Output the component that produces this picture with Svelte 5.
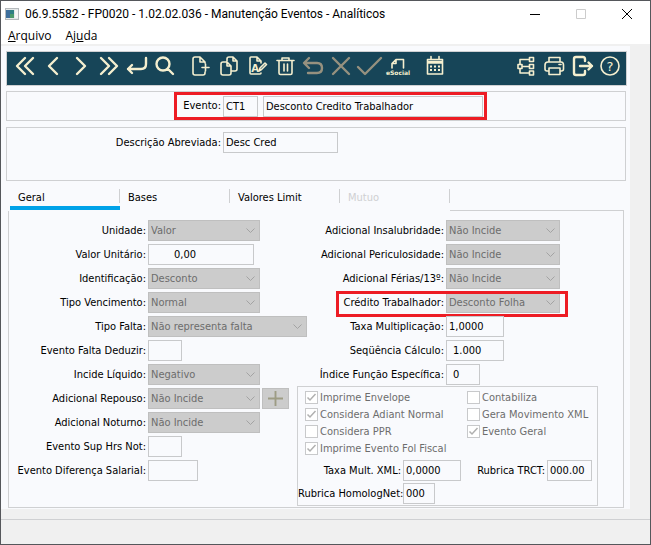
<script lang="ts">
	interface Field {
		id: string;
		label: string;
		value: string;
		size: string;
		kind?: 'select' | 'input';
		indent?: boolean;
		add?: boolean;
		marked?: boolean;
	}

	interface Check {
		id: string;
		label: string;
		checked: boolean;
	}

	interface Tool {
		icon: string;
		label: string;
		disabled?: boolean;
	}

	const toolGroups: Tool[][] = [
		[
			{ icon: 'first', label: 'Primeiro' },
			{ icon: 'prev', label: 'Anterior' },
			{ icon: 'next', label: 'Próximo' },
			{ icon: 'last', label: 'Último' },
			{ icon: 'enter', label: 'Vá para' },
			{ icon: 'search', label: 'Pesquisa' }
		],
		[
			{ icon: 'new', label: 'Inclui' },
			{ icon: 'copy', label: 'Copia' },
			{ icon: 'edit', label: 'Modifica' },
			{ icon: 'trash', label: 'Elimina' },
			{ icon: 'undo', label: 'Desfaz', disabled: true },
			{ icon: 'cancel', label: 'Cancela', disabled: true },
			{ icon: 'ok', label: 'Confirma', disabled: true },
			{ icon: 'esocial', label: 'eSocial' }
		],
		[{ icon: 'calendar', label: 'Calendário' }],
		[
			{ icon: 'tree', label: 'Consultas relacionadas' },
			{ icon: 'print', label: 'Relatórios' },
			{ icon: 'exit', label: 'Sair' },
			{ icon: 'help', label: 'Ajuda' }
		]
	];

	const strokes: Record<string, string> = {
		first: 'M14 6l-8 8 8 8M22 6l-8 8 8 8',
		prev: 'M18 6l-8 8 8 8',
		next: 'M10 6l8 8-8 8',
		last: 'M6 6l8 8-8 8M14 6l8 8-8 8',
		enter: 'M23 6v6q0 5-5 5H5M9 13l-4 4 4 4',
		search: 'M12 5.5a6.5 6.5 0 1 0 0 13a6.5 6.5 0 1 0 0-13M17 17l5 5',
		new: 'M17 11v-1l-5-5H7q-2 0-2 2v14q0 2 2 2h8q2 0 2-2v-1M12 5v5h5M17.5 12v7M14 15.5h7',
		copy: 'M11 9V7q0-2 2-2h4l4 4v8q0 2-2 2h-4M17 5v4h4M7 10h4l4 4v7q0 2-2 2H7q-2 0-2-2v-9q0-2 2-2zM11 10v4h4',
		edit: 'M17 11V9l-4-4H7q-1 0-1 1v15q0 1 1 1h9q1 0 1-1M13 5v4h4M15 19l1-3 5-5 1.5 1.5-5 5z',
		trash: 'M5 8.5h17M10 8V6h7v2M7 9v12q0 1.500 1.500 1.500h10q1.500 0 1.500-1.500V9M12 12v7M15.500 12v7',
		undo: 'M5 11h12q5 0 5 5t-5 5H8M9 6l-5 5 5 5',
		cancel: 'M5 6l16 16M21 6L5 22',
		ok: 'M2 15l7 7L25 6',
		esocial: 'M19.500 16V7.500H12L8 11.500V16M12 7.500v4H8',
		calendar: 'M6.500 7.500h15v14.500h-15zM10 4.500v3M18 4.500v3',
		tree: 'M6 12.500h4v4H6zM17.500 5.500h4v4h-4zM17.500 12.500h4v4h-4zM17.500 19h4v4h-4zM10 14.500h7M8 12V7.500h9M8 17v4h9',
		print: 'M9 10V5.500h11V10M9 19H7q-2 0-2-2v-4q0-3 3-3h13q2.500 0 2.500 3v4q0 2-2 2H20M9 16h11v6.500H9zM19 12.500h2',
		exit: 'M17 9V7q0-2-2-2H8Q6 5 6 7v14q0 2 2 2h7q2 0 2-2v-2M12 14h12M20.500 10.500l3.500 3.500-3.500 3.500',
		help: 'M14 5a9 9 0 1 0 0 18a9 9 0 1 0 0-18'
	};

	const heavy = ['first', 'prev', 'next', 'last', 'enter', 'search', 'undo', 'cancel', 'ok', 'exit'];

	const tabs = [
		{ label: 'Geral', disabled: false },
		{ label: 'Bases', disabled: false },
		{ label: 'Valores Limit', disabled: false },
		{ label: 'Mutuo', disabled: true }
	];

	const leftFields: Field[] = [
		{ id: 'unidade', label: 'Unidade:', value: 'Valor', size: 'combo', kind: 'select' },
		{ id: 'valor-unitario', label: 'Valor Unitário:', value: '0,00', size: 'amount' },
		{ id: 'identificacao', label: 'Identificação:', value: 'Desconto', size: 'combo', kind: 'select' },
		{ id: 'tipo-vencimento', label: 'Tipo Vencimento:', value: 'Normal', size: 'combo', kind: 'select' },
		{ id: 'tipo-falta', label: 'Tipo Falta:', value: 'Não representa falta', size: 'combo-wide', kind: 'select' },
		{ id: 'falta-deduzir', label: 'Evento Falta Deduzir:', value: '', size: 'short' },
		{ id: 'incide-liquido', label: 'Incide Líquido:', value: 'Negativo', size: 'combo', kind: 'select' },
		{ id: 'adic-repouso', label: 'Adicional Repouso:', value: 'Não Incide', size: 'combo', kind: 'select', add: true },
		{ id: 'adic-noturno', label: 'Adicional Noturno:', value: 'Não Incide', size: 'combo', kind: 'select' },
		{ id: 'sup-hrs-not', label: 'Evento Sup Hrs Not:', value: '', size: 'short' },
		{ id: 'dif-salarial', label: 'Evento Diferença Salarial:', value: '', size: 'medium' }
	];

	const rightFields: Field[] = [
		{ id: 'insalubridade', label: 'Adicional Insalubridade:', value: 'Não Incide', size: 'combo', kind: 'select' },
		{ id: 'periculosidade', label: 'Adicional Periculosidade:', value: 'Não Incide', size: 'combo', kind: 'select' },
		{ id: 'ferias', label: 'Adicional Férias/13º:', value: 'Não Incide', size: 'combo', kind: 'select' },
		{ id: 'credito', label: 'Crédito Trabalhador:', value: 'Desconto Folha', size: 'combo', kind: 'select', marked: true },
		{ id: 'taxa', label: 'Taxa Multiplicação:', value: '1,0000', size: 'rate' },
		{ id: 'sequencia', label: 'Seqüência Cálculo:', value: '1.000', size: 'rate', indent: true },
		{ id: 'indice', label: 'Índice Função Específica:', value: '0', size: 'short', indent: true }
	];

	const checkColumns: Check[][] = [
		[
			{ id: 'envelope', label: 'Imprime Envelope', checked: true },
			{ id: 'adiant', label: 'Considera Adiant Normal', checked: true },
			{ id: 'ppr', label: 'Considera PPR', checked: false },
			{ id: 'fol-fiscal', label: 'Imprime Evento Fol Fiscal', checked: true }
		],
		[
			{ id: 'contabiliza', label: 'Contabiliza', checked: false },
			{ id: 'gera-xml', label: 'Gera Movimento XML', checked: false },
			{ id: 'geral', label: 'Evento Geral', checked: true }
		]
	];

	let active = $state(0);
</script>

{#snippet fieldRow(field: Field)}
	<div class="field" class:marked={field.marked}>
		<label for={field.id}>{field.label}</label>
		{#if field.kind === 'select'}
			<select id={field.id} class={field.size} disabled>
				<option>{field.value}</option>
			</select>
		{:else}
			<input id={field.id} class={field.size} class:indent={field.indent} type="text" value={field.value} />
		{/if}
		{#if field.add}
			<button class="add" type="button" aria-label="Adicionar" disabled>
				<svg viewBox="0 0 16 16"><path d="M8 0v16M0 8h16" /></svg>
			</button>
		{/if}
	</div>
{/snippet}

<div class="window">
	<header class="titlebar">
		<svg class="app-icon" viewBox="0 0 14 12">
			<rect x="0.5" y="0.5" width="13" height="11" fill="#e4e8e8" stroke="#b5b9bc" />
			<rect x="1" y="2" width="8" height="8" fill="#2f7f84" />
			<rect x="1" y="2" width="4" height="8" fill="#3d6f9c" />
			<rect x="5" y="6" width="4" height="4" fill="#4a9a6c" />
			<rect x="10" y="2" width="3" height="8" fill="#f6f6f6" />
		</svg>
		<h1>06.9.5582 - FP0020 - 1.02.02.036 - Manutenção Eventos - Analíticos</h1>
		<div class="controls">
			<button type="button" aria-label="Minimizar">
				<svg viewBox="0 0 12 12"><path d="M1 6.500h10" /></svg>
			</button>
			<button type="button" aria-label="Maximizar" disabled>
				<svg viewBox="0 0 12 12"><path d="M1.500 1.500h9v9h-9z" /></svg>
			</button>
			<button type="button" aria-label="Fechar">
				<svg viewBox="0 0 12 12"><path d="M1 1l10 10M11 1L1 11" /></svg>
			</button>
		</div>
	</header>

	<nav class="menubar">
		<button type="button"><u>A</u>rquivo</button>
		<button type="button">Aj<u>u</u>da</button>
	</nav>

	<main>
		<div class="toolbar" role="toolbar" aria-label="Ferramentas">
			{#each toolGroups as group}
				<div class="group">
					{#each group as tool (tool.icon)}
						<button type="button" aria-label={tool.label} disabled={tool.disabled}>
							<svg viewBox="0 0 28 28" class:heavy={heavy.includes(tool.icon)}>
								<path d={strokes[tool.icon]} />
								{#if tool.icon === 'edit'}
									<text x="11" y="20" font-size="10">A</text>
								{:else if tool.icon === 'esocial'}
									<text x="14" y="23" font-size="6">eSocial</text>
								{:else if tool.icon === 'help'}
									<text class="thin" x="14" y="19" font-size="13">?</text>
								{:else if tool.icon === 'calendar'}
									<path d="M7 9.500h14M7 11h14" />
									<path class="dots" d="M9 14.500h2M13 14.500h2M17 14.500h2M9 18h2M13 18h2M17 18h2" />
								{/if}
							</svg>
						</button>
					{/each}
				</div>
			{/each}
		</div>

		<section class="panel key">
			<div class="highlight">
				<label for="evento">Evento:</label>
				<div class="pair">
					<input id="evento" class="code" type="text" value="CT1" />
					<input class="description" type="text" aria-label="Descrição" value="Desconto Credito Trabalhador" />
				</div>
			</div>
		</section>

		<section class="panel summary">
			<label for="abreviada">Descrição Abreviada:</label>
			<input id="abreviada" class="abbrev" type="text" value="Desc Cred" />
		</section>

		<div class="tabs" role="tablist">
			{#each tabs as tab, i (tab.label)}
				<button
					type="button"
					role="tab"
					aria-selected={active === i}
					class:active={active === i}
					disabled={tab.disabled}
					onclick={() => (active = i)}
				>
					<span>{tab.label}</span>
				</button>
			{/each}
			<div class="filler"></div>
		</div>

		<section class="page" role="tabpanel">
			<div class="column left">
				{#each leftFields as field (field.id)}
					{@render fieldRow(field)}
				{/each}
			</div>

			<div class="column right">
				{#each rightFields as field (field.id)}
					{@render fieldRow(field)}
				{/each}

				<div class="box">
					<div class="checks">
						{#each checkColumns as column}
							<div class="check-column">
								{#each column as check (check.id)}
									<div class="check">
										<input id={check.id} type="checkbox" checked={check.checked} disabled />
										<label for={check.id}>{check.label}</label>
									</div>
								{/each}
							</div>
						{/each}
					</div>
					<div class="codes">
						<label for="taxa-xml">Taxa Mult. XML:</label>
						<input id="taxa-xml" class="rate" type="text" value="0,0000" />
						<label for="trct">Rubrica TRCT:</label>
						<input id="trct" class="trct" type="text" value="000.00" />
						<label for="homolog">Rubrica HomologNet:</label>
						<input id="homolog" class="homolog" type="text" value="000" />
					</div>
				</div>
			</div>
		</section>
	</main>

	<footer class="status"></footer>
</div>

<style>
	:global(body) {
		margin: 0;
	}

	.window {
		--line: #cfd0d2;
		--surface: #f9fafd;
		--cream: #f5efcf;
		--red: #ed1c24;
		display: flex;
		flex-direction: column;
		box-sizing: border-box;
		min-height: 100vh;
		border: 1px solid #55575b;
		background: #f0f0f0;
		color: #000;
		font-family: 'DejaVu Sans Condensed', Tahoma, 'DejaVu Sans', sans-serif;
		font-size: 11px;
	}

	.window *,
	.window *::after {
		box-sizing: border-box;
	}

	button {
		padding: 0;
		border: 0;
		background: none;
		color: inherit;
		font: inherit;
	}

	svg {
		display: block;
		fill: none;
		stroke: currentColor;
	}

	/* Title bar and menu */
	.titlebar {
		display: flex;
		align-items: center;
		height: 25px;
		padding-left: 4px;
		background: #fff;
	}

	.app-icon {
		width: 14px;
		height: 12px;
		stroke: none;
	}

	h1 {
		flex: 1;
		margin: 0 0 0 6px;
		font-family: Roboto, 'Segoe UI', sans-serif;
		font-size: 12px;
		font-weight: 400;
		white-space: nowrap;
	}

	.controls {
		display: flex;
	}

	.controls button {
		display: grid;
		place-items: center;
		width: 46px;
		height: 25px;
	}

	.controls svg {
		width: 12px;
		height: 12px;
	}

	.controls button:disabled {
		color: #ccc;
	}

	.menubar {
		display: flex;
		gap: 14px;
		height: 18px;
		padding-left: 7px;
		background: #fff;
		font-family: 'Open Sans', 'Segoe UI', sans-serif;
		font-size: 12px;
		line-height: 20px;
	}

	/* Work area */
	main {
		margin-right: 20px;
		margin-top: 2px;
		padding: 5px 3px 1px 5px;
		background: var(--surface);
	}

	.toolbar {
		display: flex;
		gap: 9px;
		height: 35px;
		margin-bottom: 5px;
		padding: 0 2px 0 4px;
		border: 1px solid var(--line);
		background: #174558;
		color: var(--cream);
	}

	.group {
		display: flex;
	}

	.group:last-child {
		margin-left: auto;
	}

	.group button {
		width: 28px;
		height: 28px;
	}

	.group button:disabled {
		color: #96917f;
	}

	.group svg {
		width: 28px;
		height: 28px;
		stroke-width: 1.6;
		stroke-linecap: round;
		stroke-linejoin: round;
	}

	.group svg.heavy {
		stroke-width: 2.4;
	}

	.group text {
		fill: currentColor;
		stroke: none;
		font-family: 'DejaVu Sans', sans-serif;
		font-weight: 700;
		text-anchor: middle;
	}

	.group text.thin {
		font-weight: 400;
	}

	.dots {
		stroke-linecap: butt;
		stroke-width: 2;
	}

	.panel {
		display: flex;
		margin: 0 1px 6px 0;
		border: 1px solid var(--line);
	}

	.key {
		padding-left: 167px;
	}

	.highlight {
		display: flex;
		align-items: center;
		gap: 2px;
		width: 313px;
		height: 28px;
		border: 3px solid var(--red);
	}

	.highlight label {
		width: 44px;
		text-align: right;
	}

	.pair {
		display: flex;
		gap: 5px;
	}

	.summary {
		gap: 2px;
		height: 54px;
		margin-bottom: 5px;
		padding-top: 4px;
	}

	.summary label {
		width: 214px;
		text-align: right;
	}

	label {
		line-height: 22px;
		white-space: nowrap;
	}

	input[type='text'],
	select {
		height: 21px;
		margin: 0;
		padding: 0 2px;
		border: 1px solid #c8c9cb;
		border-radius: 0;
		background: var(--surface);
		color: #000;
		font: inherit;
	}

	select {
		appearance: none;
		background: #ccc
			url("data:image/svg+xml,%3csvg xmlns='http://www.w3.org/2000/svg' viewBox='0 0 9 5' fill='none' stroke='%23a3a3a3'%3e%3cpath d='M.5.5l4 4 4-4'/%3e%3c/svg%3e")
			no-repeat right 4px center / 9px 5px;
		border-color: #bfbfbf;
		color: #6d6d6d;
		opacity: 1;
	}

	.code {
		width: 35px;
	}

	.description {
		width: 220px;
	}

	.abbrev {
		width: 115px;
	}

	/* Tabs */
	.tabs {
		display: flex;
		height: 25px;
		margin: 0 3px 0 4px;
	}

	.tabs button {
		width: 110px;
		height: 24px;
		border-bottom: 4px solid transparent;
		text-align: left;
	}

	.tabs button.active {
		border-color: #00a2e8;
	}

	.tabs button:disabled {
		color: #cfd0d2;
	}

	.tabs span {
		display: block;
		height: 14px;
		padding-left: 8px;
		border-right: 1px solid var(--line);
		line-height: 17px;
	}

	.filler {
		flex: 1;
		border-bottom: 1px solid var(--line);
	}

	.page {
		display: flex;
		margin: 0 3px 0 2px;
		padding: 9px 0 1px;
		border: 1px solid var(--line);
		border-top: 0;
	}

	.column {
		display: flex;
		flex-direction: column;
		gap: 3px;
	}

	.left {
		flex: none;
		width: 288px;
	}

	.right {
		flex: 1;
		min-width: 0;
	}

	.field {
		position: relative;
		display: flex;
		gap: 2px;
		height: 21px;
	}

	.field > * {
		flex: none;
	}

	.field label {
		width: 137px;
		text-align: right;
	}

	.right .field label {
		width: 147px;
	}

	.marked::after {
		content: '';
		position: absolute;
		top: -1px;
		left: 39px;
		width: 232px;
		height: 26px;
		border: 3px solid var(--red);
	}

	.combo {
		width: 112px;
	}

	.right .combo {
		width: 114px;
	}

	.combo-wide {
		width: 159px;
	}

	input.amount {
		width: 106px;
		padding-left: 25px;
	}

	.short {
		width: 34px;
	}

	.medium {
		width: 50px;
	}

	.rate {
		width: 58px;
	}

	input.indent {
		padding-left: 6px;
	}

	.add {
		display: grid;
		place-items: center;
		width: 27px;
		height: 21px;
		border: 1px solid #bfbfbf;
		background: #ccc;
		color: #9d9c84;
	}

	.add svg {
		width: 15px;
		height: 15px;
		stroke-width: 2;
	}

	/* Options box */
	.box {
		margin: -2px 25px 0 0;
		padding: 2px 6px 1px 0;
		border: 1px solid var(--line);
	}

	.checks {
		display: flex;
		padding-left: 7px;
	}

	.check-column:first-child {
		width: 162px;
	}

	.check {
		display: flex;
		align-items: center;
		gap: 2px;
		height: 17px;
		color: #6d6d6d;
	}

	.check label {
		line-height: 16px;
	}

	input[type='checkbox'] {
		appearance: none;
		width: 13px;
		height: 13px;
		margin: 0;
		border: 1px solid #c8c9cb;
		background: #fff;
	}

	input[type='checkbox']:checked {
		background: #fff
			url("data:image/svg+xml,%3csvg xmlns='http://www.w3.org/2000/svg' viewBox='0 0 11 11' fill='none' stroke='%23b0b0b0' stroke-width='1.500'%3e%3cpath d='M1.500 5.500l2.500 2.500 5.500-6'/%3e%3c/svg%3e")
			no-repeat center / 11px 11px;
	}

	.codes {
		display: grid;
		grid-template-columns: 103px 58px 82px 45px;
		gap: 2px;
		margin-top: 3px;
	}

	.codes label {
		height: 21px;
		text-align: right;
	}

	.trct {
		width: 45px;
	}

	.homolog {
		width: 32px;
	}

	.status {
		flex: 1;
		min-height: 24px;
		margin-top: 10px;
		border-top: 1px solid var(--line);
	}
</style>
